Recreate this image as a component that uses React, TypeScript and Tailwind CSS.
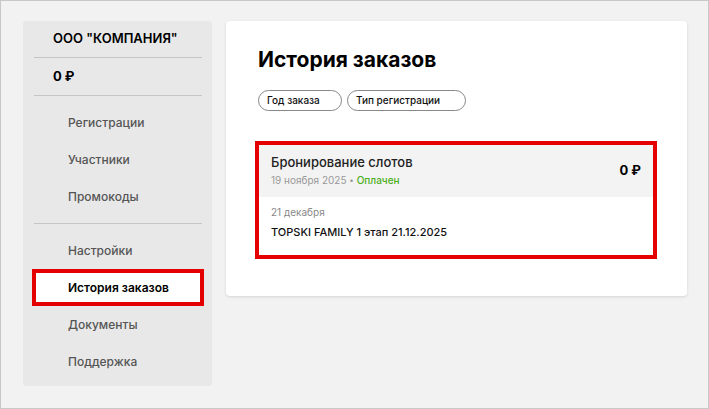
const font = { fontFamily: 'Inter, "Noto Sans", sans-serif' }

const topItems = ['Регистрации', 'Участники', 'Промокоды']
const bottomItems = ['Настройки', 'История заказов', 'Документы', 'Поддержка']
const active = 'История заказов'

function NavItem({ label }: { label: string }) {
  const isActive = label === active
  return (
    <div
      className={
        'h-[37px] flex items-center pl-[32px] border-4 text-[12px] ' +
        (isActive ? 'border-[#e50000] bg-white text-black font-semibold' : 'border-transparent text-[#555] font-medium')
      }
    >
      {label}
    </div>
  )
}

function Sidebar() {
  return (
    <aside className="w-[189px] shrink-0 self-start bg-[#e8e8e8] rounded-[3px] pl-[9px] pr-[8px] pb-[6px]">
      <div className="h-[36px] flex items-center pl-[21px] text-[13px] font-semibold text-black">ООО "КОМПАНИЯ"</div>
      <div className="mx-[2px] h-px bg-[#c6c6c6]" />
      <div className="h-[37px] flex items-center pl-[21px] text-[13px] font-bold text-black">0 ₽</div>
      <div className="mx-[2px] h-px bg-[#c6c6c6]" />
      <div className="pt-[8px] pb-[8px]">
        {topItems.map(l => <NavItem key={l} label={l} />)}
      </div>
      <div className="mx-[2px] h-px bg-[#c6c6c6]" />
      <div className="pt-[8px]">
        {bottomItems.map(l => <NavItem key={l} label={l} />)}
      </div>
    </aside>
  )
}

function OrderCard() {
  return (
    <div className="-ml-[3px] w-[402px] border-4 border-[#e50000] bg-white">
      <div className="bg-[#f3f3f3] h-[52px] px-[12px] flex items-center justify-between">
        <div className="mb-[2px]">
          <p className="text-[13px] font-medium text-[#222] leading-[16px]">Бронирование слотов</p>
          <p className="text-[10px] text-[#999] mt-[4px] leading-[12px]">
            19 ноября 2025 <span className="text-[8px] align-[1px]">•</span> <span className="text-[#4caf1a] font-medium">Оплачен</span>
          </p>
        </div>
        <p className="text-[13px] font-bold text-black">0 ₽</p>
      </div>
      <div className="px-[12px] pt-[9px] pb-[16px]">
        <p className="text-[10px] text-[#888] leading-[12px]">21 декабря</p>
        <p className="text-[11px] font-medium text-[#111] mt-[7px] leading-[14px]">TOPSKI FAMILY 1 этап 21.12.2025</p>
      </div>
    </div>
  )
}

export default function App() {
  return (
    <div className="w-[709px] h-[409px] bg-[#f2f2f2] border border-[#c8c8c8] overflow-hidden" style={font}>
      <div className="flex gap-[14px] pl-[22px] pt-[20px]">
        <Sidebar />
        <main className="w-[461px] self-start bg-white rounded-[4px] shadow-[0_1px_3px_rgba(0,0,0,0.12)] pl-[32px] pt-[25px] pb-[37px]">
          <h1 className="text-[21px] font-bold text-black leading-[28px]">История заказов</h1>
          <div className="flex gap-[5px] mt-[16px]">
            <button className="w-[84px] h-[21px] rounded-full border border-[#888] text-[10px] font-medium text-[#111] text-left pl-[8px]">Год заказа</button>
            <button className="w-[119px] h-[21px] rounded-full border border-[#888] text-[10px] font-medium text-[#111] text-left pl-[8px]">Тип регистрации</button>
          </div>
          <div className="mt-[30px]">
            <OrderCard />
          </div>
        </main>
      </div>
    </div>
  )
}
